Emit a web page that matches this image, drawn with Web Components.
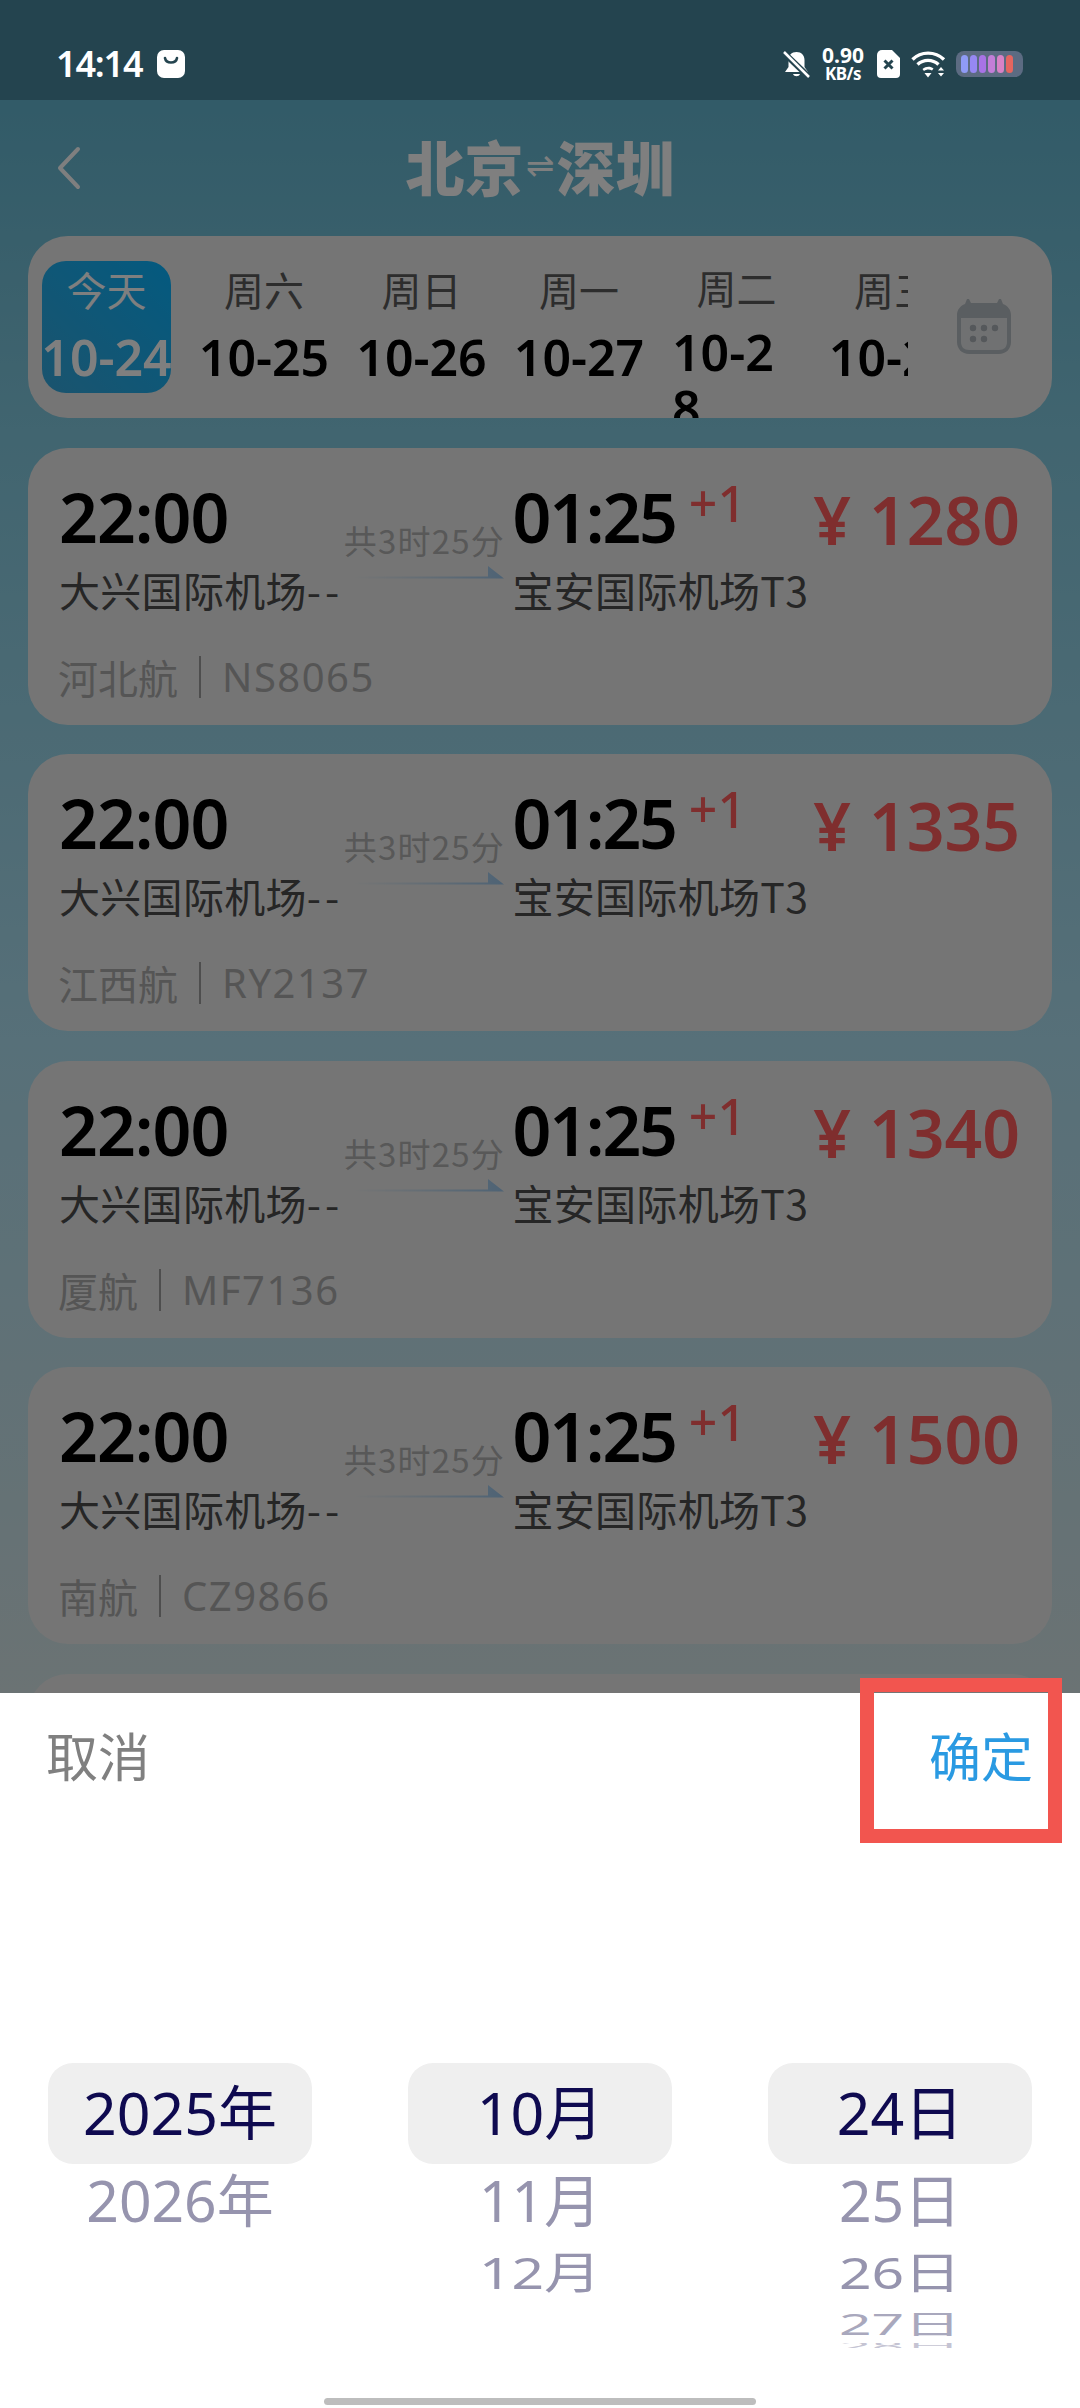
<!DOCTYPE html>
<html lang="zh">
<head>
<meta charset="utf-8">
<style>
  html, body { margin: 0; padding: 0; }
  body {
    width: 1080px; height: 2408px; overflow: hidden; position: relative;
    font-family: "Noto Sans", "Noto Sans CJK SC", sans-serif;
    display: flex; flex-direction: column;
  }
</style>
</head>
<body>
<status-bar></status-bar>
<flight-page>
  <nav-header title-from="北京" title-to="深圳"></nav-header>
  <date-strip></date-strip>
  <flight-card airline="河北航" code="NS8065" price="1280"></flight-card>
  <flight-card airline="江西航" code="RY2137" price="1335"></flight-card>
  <flight-card airline="厦航" code="MF7136" price="1340"></flight-card>
  <flight-card airline="南航" code="CZ9866" price="1500"></flight-card>
  <flight-card empty></flight-card>
</flight-page>
<date-sheet></date-sheet>

<script>
class StatusBar extends HTMLElement {
  constructor() {
    super()
    this.attachShadow({mode: 'open'})
  }
  connectedCallback() {
    this.shadowRoot.innerHTML = `<style>
      :host { display: flex; align-items: center; height: 100px; flex: none; background: #24444f; color: #fff; padding: 28px 57px 0 56px; box-sizing: border-box; font-family: "Noto Sans", sans-serif; }
      .time { font-size: 36px; font-weight: 600; letter-spacing: -1.2px; line-height: 1; }
      .bag { margin-left: 15px; }
      .right { margin-left: auto; display: flex; align-items: center; }
      .speed { width: 46px; margin: 0 11px 0 10px; text-align: center; font-weight: 700; line-height: 1; }
      .speed div:first-child { font-size: 21px; line-height: 19px; }
      .speed div:last-child { font-size: 17px; line-height: 17px; white-space: nowrap; letter-spacing: -.5px; }
      svg { display: block; flex: none; }
    </style>
    <span class="time">14:14</span>
    <svg class="bag" width="28" height="28" viewBox="0 0 28 28"><rect width="28" height="28" rx="7" fill="#fff"/><path d="M8 8c1 6 11 6 12 0" fill="none" stroke="#24444f" stroke-width="2.6" stroke-linecap="round"/></svg>
    <div class="right">
      <svg width="27" height="27" viewBox="0 0 27 27"><path d="M13.500 1c-5 0-8 3.500-8 8v7l-3.500 5h23l-3.500-5V9c0-4.500-3-8-8-8z" fill="#fff"/><path d="M10 23c1 3 6 3 7 0z" fill="#fff"/><path d="M1 2l25 24" stroke="#24444f" stroke-width="6"/><path d="M1 1l25 25" stroke="#fff" stroke-width="2.500"/></svg>
      <div class="speed"><div>0.90</div><div>KB/s</div></div>
      <svg width="23" height="28" viewBox="0 0 23 28"><path d="M5 0h10l8 8v16a4 4 0 0 1-4 4H4a4 4 0 0 1-4-4V5a5 5 0 0 1 5-5z" fill="#fff"/><path d="M7.500 10.500l8 8M15.500 10.500l-8 8" stroke="#24444f" stroke-width="3"/></svg>
      <svg style="margin-left:11px" width="35" height="28" viewBox="0 0 35 28"><g fill="none" stroke="#fff" stroke-width="3.400"><path d="M1.500 9.500C10 1 24 1 33 9.500"/><path d="M6.500 14.500c6-5.500 15-5.500 21 0"/></g><path d="M11.500 19c3.500-3 8-3 11-.5l-1.500 2c-2.500-1.500-5.500-1.500-8 .5z" fill="#fff"/><path d="M13.500 23h7l-3.500 4.500z" fill="#fff"/><path d="M27 20.500l3-3.500 3 3.500zM27 23l3 3.500 3-3.500z" fill="#fff"/></svg>
      <svg style="margin-left:10px" width="67" height="26" viewBox="0 0 67 26"><rect width="67" height="26" rx="8" fill="#5c6b82"/>
        <rect x="5" y="4" width="7" height="18" rx="3.500" fill="#8f9bf6"/><rect x="14" y="4" width="7" height="18" rx="3.500" fill="#9688f2"/><rect x="23" y="4" width="7" height="18" rx="3.500" fill="#a873e6"/><rect x="32" y="4" width="7" height="18" rx="3.500" fill="#c37ed8"/><rect x="41" y="4" width="7" height="18" rx="3.500" fill="#d882c6"/><rect x="50" y="4" width="7" height="18" rx="3.500" fill="#e5655f"/></svg>
    </div>`;
  }
}

class FlightPage extends HTMLElement {
  constructor() {
    super()
    this.attachShadow({mode: 'open'})
  }
  connectedCallback() {
    this.shadowRoot.innerHTML = `<style>
      :host { display: block; flex: 1; position: relative; overflow: hidden; background: linear-gradient(180deg, #64b6d0 0, #82cae0 330px, #aee0f2 940px, #d6e6e8 1590px); }
      .list { display: flex; flex-direction: column; gap: 29.500px; padding: 0 28px; }
      .mask { position: absolute; inset: 0; background: rgba(0,0,0,.5); }
    </style>
    <div class="list"><slot></slot></div>
    <div class="mask"></div>`;
  }
}

class NavHeader extends HTMLElement {
  constructor() {
    super()
    this.attachShadow({mode: 'open'})
  }
  connectedCallback() {
    this.shadowRoot.innerHTML = `<style>
      :host { display: flex; align-items: center; justify-content: center; position: relative; height: 136px; margin-bottom: -29.500px; color: #fff; }
      svg { position: absolute; left: 26px; top: 46px; }
      h1 { margin: 0 0 6px; font: 900 59px/1 "Noto Sans CJK SC", sans-serif; display: flex; align-items: center; }
      .arrows { font: 400 34px/1 "DejaVu Sans", sans-serif; width: 33px; text-align: center; display: flex; justify-content: center; }
    </style>
    <svg width="30" height="44" viewBox="0 0 30 44"><path d="M24 3L6 22l18 19" fill="none" stroke="#fff" stroke-width="4" stroke-linecap="round" stroke-linejoin="round"/></svg>
    <h1>${this.getAttribute('title-from')}<span class="arrows">⇌</span>${this.getAttribute('title-to')}</h1>`;
  }
}

class DateStrip extends HTMLElement {
  constructor() {
    super()
    this.attachShadow({mode: 'open'})
    this.days = [['周六', '10-25'], ['周日', '10-26'], ['周一', '10-27'], ['周二', '10-28'], ['周三', '10-29']];
  }
  connectedCallback() {
    const items = this.days.map(d =>
      `<div class="day ${d[1] === '10-28' ? 'wrapped' : ''}"><div class="wk">${d[0]}</div><div class="dt">${d[1]}</div></div>`
    ).join('');
    this.shadowRoot.innerHTML = `<style>
      :host { display: flex; height: 182px; background: #ebebeb; border-radius: 40px; overflow: hidden; padding-left: 14px; box-sizing: border-box; }
      .scroll { width: 866px; flex: none; display: flex; gap: 28.500px; overflow: hidden; padding-top: 25px; }
      .day { width: 129px; flex: none; text-align: center; padding-top: 5px; height: 132px; box-sizing: border-box; }
      .wk { font: 400 40px/46px "Noto Sans CJK SC", sans-serif; color: #5a5a5a; }
      .dt { font: 600 50px/62px "Noto Sans", sans-serif; color: #000; margin: 14px -4px 0; white-space: nowrap; }
      .wrapped { padding-top: 3px; }
      .wrapped .dt { white-space: normal; word-break: break-all; width: 112px; margin: 14px 0 0 0; line-height: 56px; text-align: left; }
      .today { background: linear-gradient(45deg, #36a8dc, #08b4ff); border-radius: 24px; color: #fff; overflow: hidden; }
      .today .wk, .today .dt { color: #fff; }
      .cal { margin: 62px 0 0 49px; flex: none; }
    </style>
    <div class="scroll">
      <div class="day today"><div class="wk">今天</div><div class="dt">10-24</div></div>
      ${items}
    </div>
    <svg class="cal" width="54" height="57" viewBox="0 0 54 57"><path d="M10 1h2l2 4h26l2-4h2l2 5c5 2 8 6 8 11v27c0 7-5 12-12 12H12C5 56 0 51 0 44V17c0-5 3-9 8-11z" fill="#b5bcc2"/><path d="M4 20h46v24c0 5-3 8-8 8H12c-5 0-8-3-8-8z" fill="#e0e2e4"/><g fill="#aab0b6"><circle cx="16" cy="30" r="3.200"/><circle cx="27" cy="30" r="3.200"/><circle cx="38" cy="30" r="3.200"/><circle cx="16" cy="41" r="3.200"/><circle cx="27" cy="41" r="3.200"/></g></svg>`;
  }
}

class FlightCard extends HTMLElement {
  constructor() {
    super()
    this.attachShadow({mode: 'open'})
  }
  connectedCallback() {
    const style = `<style>
      :host { display: block; height: 277px; background: #ebebeb; border-radius: 40px; padding: 32px 32px 0 31px; box-sizing: border-box; flex: none; }
      .top { display: flex; justify-content: space-between; }
      .dep { width: 281px; flex: none; }
      .arr { width: 297px; flex: none; }
      .time { font: 600 68px/74px "Noto Sans", sans-serif; color: #000; white-space: nowrap; letter-spacing: -1px; }
      .arr .time { display: flex; letter-spacing: -2.2px; }
      .plus { font: 500 50px/46px "Noto Sans", sans-serif; color: #ff5c5c; margin: 0 0 0 13px; letter-spacing: 0; }
      .port { font: 400 41px/50px "Noto Sans CJK SC", sans-serif; color: #4c4c4c; margin-top: 10px; white-space: nowrap; letter-spacing: .3px; }
      .dash { letter-spacing: 4px; }
      .mid { width: 165px; flex: none; padding-top: 40px; }
      .dur { font: 400 33px/40px "Noto Sans CJK SC", sans-serif; color: #b0b0b0; letter-spacing: 1.2px; white-space: nowrap; }
      .mid svg { display: block; margin: 6px 0 0 8px; }
      .price { font: 600 66px/78px "Noto Sans", sans-serif; color: #ff5c5c; white-space: nowrap; }
      .price span { margin-right: 18px; }
      .air { display: flex; align-items: center; gap: 21px; margin: 38px 0 0 -1px; font: 400 40px/50px "Noto Sans CJK SC", sans-serif; color: #aaa; }
      .air i { width: 2px; height: 42px; background: #9c9c9c; }
      .air b { font: 400 40px/50px "Noto Sans", sans-serif; letter-spacing: 1.5px; }
    </style>`;
    if (this.hasAttribute('empty')) {
      this.shadowRoot.innerHTML = style;
      return;
    }
    this.shadowRoot.innerHTML = style + `
    <div class="top">
      <div class="dep"><div class="time">22:00</div><div class="port">大兴国际机场<span class="dash">--</span></div></div>
      <div class="mid"><div class="dur">共3时25分</div>
        <svg width="152" height="13" viewBox="0 0 152 13"><defs><linearGradient id="g"><stop offset="0" stop-color="#a9cdea" stop-opacity="0"/><stop offset="1" stop-color="#9cc6ea"/></linearGradient></defs><path d="M0 10.500h136V0l16 12.500H0z" fill="url(#g)"/></svg>
      </div>
      <div class="arr"><div class="time">01:25<span class="plus">+1</span></div><div class="port">宝安国际机场T3</div></div>
      <div class="price"><span>¥</span>${this.getAttribute('price')}</div>
    </div>
    <div class="air">${this.getAttribute('airline')}<i></i><b>${this.getAttribute('code')}</b></div>`;
  }
}

class WheelColumn extends HTMLElement {
  constructor() {
    super()
    this.attachShadow({mode: 'open'})
  }
  connectedCallback() {
    const vals = this.getAttribute('items').split(',');
    // each row is squeezed more the further it is from the selected one
    const rows = vals.map((v, i) => `<div class="row r${i}"><span>${v}</span></div>`).join('');
    this.shadowRoot.innerHTML = `<style>
      :host { display: block; width: 264px; flex: none; }
      .row { text-align: center; color: #9694ae; font: 400 57px/1 "Noto Sans", "Noto Sans CJK SC", sans-serif; overflow: hidden; }
      .row span { display: block; }
      .r0 { height: 101px; background: #efefef; border-radius: 25px; color: #0f0a50; font-size: 59px; }
      .r0 span { line-height: 99px; }
      .r1 { height: 74px; }
      .r1 span { line-height: 72px; }
      .r2 { height: 66px; }
      .r2 span { line-height: 68px; transform: scaleY(.78); }
      .r3 { height: 28px; margin-top: 4px; }
      .r3 span { line-height: 40px; transform: scaleY(.5); transform-origin: 50% 30%; color: #a9a8bd; }
      .r4 { height: 5px; margin-top: 7px; }
      .r4 span { line-height: 5px; transform: scaleY(.2); color: #c5c4d3; }
    </style>${rows}`;
  }
}

class DateSheet extends HTMLElement {
  constructor() {
    super()
    this.attachShadow({mode: 'open'})
  }
  connectedCallback() {
    this.shadowRoot.innerHTML = `<style>
      :host { display: block; position: absolute; left: 0; right: 0; bottom: 0; height: 715px; background: #fff; }
      .head { display: flex; justify-content: space-between; padding: 32px 47px 0 46px; font: 400 52px/60px "Noto Sans CJK SC", sans-serif; color: #808080; }
      .ok { color: #2a9ae2; }
      .wheel { display: flex; justify-content: space-between; padding: 278px 48px 0; }
      .mark { position: absolute; left: 860px; top: -15px; width: 202px; height: 165px; border: 14px solid #f2554f; box-sizing: border-box; }
      .home { position: absolute; left: 324px; bottom: 3px; width: 432px; height: 7px; border-radius: 4px; background: #bdbdbd; }
    </style>
    <div class="head"><span>取消</span><span class="ok">确定</span></div>
    <div class="wheel">
      <wheel-column items="2025年,2026年"></wheel-column>
      <wheel-column items="10月,11月,12月"></wheel-column>
      <wheel-column items="24日,25日,26日,27日,28日"></wheel-column>
    </div>
    <div class="mark"></div>
    <div class="home"></div>`;
  }
}

customElements.define('status-bar', StatusBar)
customElements.define('flight-page', FlightPage)
customElements.define('nav-header', NavHeader)
customElements.define('date-strip', DateStrip)
customElements.define('flight-card', FlightCard)
customElements.define('wheel-column', WheelColumn)
customElements.define('date-sheet', DateSheet)
</script>
</body>
</html>
